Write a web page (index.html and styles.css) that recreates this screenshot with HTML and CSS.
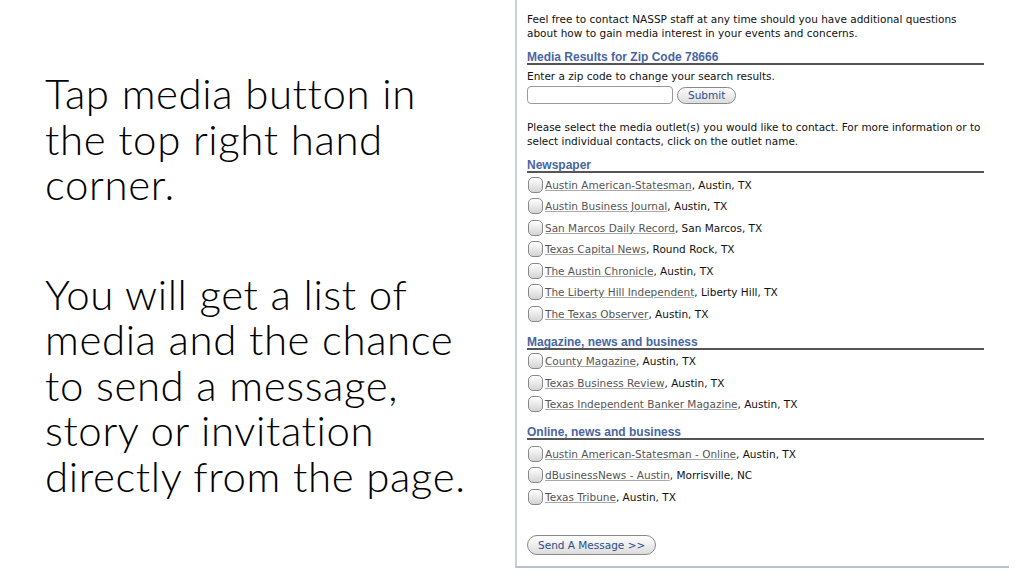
FILE: index.html
```html
<!DOCTYPE html>
<html lang="en">
<head>
    <meta charset="UTF-8">
    <title>Media Contacts</title>
    <link rel="stylesheet" href="styles.css">
</head>
<body>

<div class="slide-text">
    <p>Tap media button in<br>the top right hand<br>corner.</p>
    <p>You will get a list of<br>media and the chance<br>to send a message,<br>story or invitation<br>directly from the page.</p>
</div>

<div class="panel">
    <p class="intro">Feel free to contact NASSP staff at any time should you have additional questions about how to gain media interest in your events and concerns.</p>

    <h2 class="section-title">Media Results for Zip Code 78666</h2>
    <p class="hint">Enter a zip code to change your search results.</p>
    <div class="zip-row">
        <input type="text" class="zip-input">
        <button class="pill">Submit</button>
    </div>

    <p class="intro select-text">Please select the media outlet(s) you would like to contact. For more information or to select individual contacts, click on the outlet name.</p>

    <h2 class="section-title">Newspaper</h2>
    <ul class="outlets">
        <li><span class="check"></span><a href="#">Austin American-Statesman</a>, Austin, TX</li>
        <li><span class="check"></span><a href="#">Austin Business Journal</a>, Austin, TX</li>
        <li><span class="check"></span><a href="#">San Marcos Daily Record</a>, San Marcos, TX</li>
        <li><span class="check"></span><a href="#">Texas Capital News</a>, Round Rock, TX</li>
        <li><span class="check"></span><a href="#">The Austin Chronicle</a>, Austin, TX</li>
        <li><span class="check"></span><a href="#">The Liberty Hill Independent</a>, Liberty Hill, TX</li>
        <li><span class="check"></span><a href="#">The Texas Observer</a>, Austin, TX</li>
    </ul>

    <h2 class="section-title">Magazine, news and business</h2>
    <ul class="outlets">
        <li><span class="check"></span><a href="#">County Magazine</a>, Austin, TX</li>
        <li><span class="check"></span><a href="#">Texas Business Review</a>, Austin, TX</li>
        <li><span class="check"></span><a href="#">Texas Independent Banker Magazine</a>, Austin, TX</li>
    </ul>

    <h2 class="section-title">Online, news and business</h2>
    <ul class="outlets online">
        <li><span class="check"></span><a href="#">Austin American-Statesman - Online</a>, Austin, TX</li>
        <li><span class="check"></span><a href="#">dBusinessNews - Austin</a>, Morrisville, NC</li>
        <li><span class="check"></span><a href="#">Texas Tribune</a>, Austin, TX</li>
    </ul>

    <button class="pill send">Send A Message &gt;&gt;</button>
</div>

</body>
</html>
```

FILE: styles.css
```css
body {
    margin: 0;
    background-color: white;
    display: flex;
    align-items: flex-start;
    height: 576px;
    overflow: hidden;
}
.slide-text {
    width: 470px;
    padding: 71px 0 0 45px;
    font-family: Lato, "Open Sans", sans-serif;
    font-weight: 300;
    font-size: 42px;
    letter-spacing: 0.6px;
    line-height: 45.5px;
    color: #000;
}
.slide-text p {
    margin: 0 0 64px 0;
}
.panel {
    width: 457px;
    height: 554px;
    padding: 12px 25px 0 10px;
    border-left: 2px solid #c9d0d8;
    border-bottom: 2px solid #b8c1cb;
    font-family: "DejaVu Sans", Verdana, sans-serif;
    font-size: 10.5px;
    color: #111;
}
.intro {
    margin: 0;
    line-height: 14px;
}
.select-text {
    margin-top: 16px;
}
.section-title {
    margin: 11px 0 0 0;
    padding: 0;
    line-height: 12px;
    font-family: "Liberation Sans", Arial, sans-serif;
    font-size: 12px;
    font-weight: bold;
    color: #4866a3;
    border-bottom: 2px solid #555;
}
.hint {
    margin: 4px 0 0 0;
    line-height: 14px;
}
.zip-row {
    display: flex;
    gap: 4px;
    align-items: center;
    margin-top: 3px;
}
.zip-input {
    box-sizing: border-box;
    width: 146px;
    height: 18px;
    border: 1px solid #999;
    border-radius: 4px;
    padding: 0 2px;
}
.pill {
    font-family: "DejaVu Sans", Verdana, sans-serif;
    font-size: 10.5px;
    color: #2b4d8a;
    background: linear-gradient(#ffffff, #dcdcdc);
    border: 1px solid #888;
    border-radius: 9px;
    height: 17px;
    padding: 0 10px;
}
.outlets {
    list-style: none;
    margin: 1px 0 0 0;
    padding: 0;
}
.outlets.online {
    margin-top: 3px;
}
.outlets li {
    display: flex;
    align-items: center;
    height: 21.5px;
    white-space: pre;
}
.check {
    width: 13px;
    height: 14px;
    margin: 0 2px 0 1px;
    border: 1px solid #888;
    border-radius: 5px;
    background: linear-gradient(#ffffff, #d4d4d4);
}
.outlets a {
    color: #555;
    text-decoration: underline;
    text-decoration-color: #aaa;
}
.send {
    margin-top: 27px;
    height: 20px;
    border-radius: 10px;
    padding: 0 10px;
}
```
